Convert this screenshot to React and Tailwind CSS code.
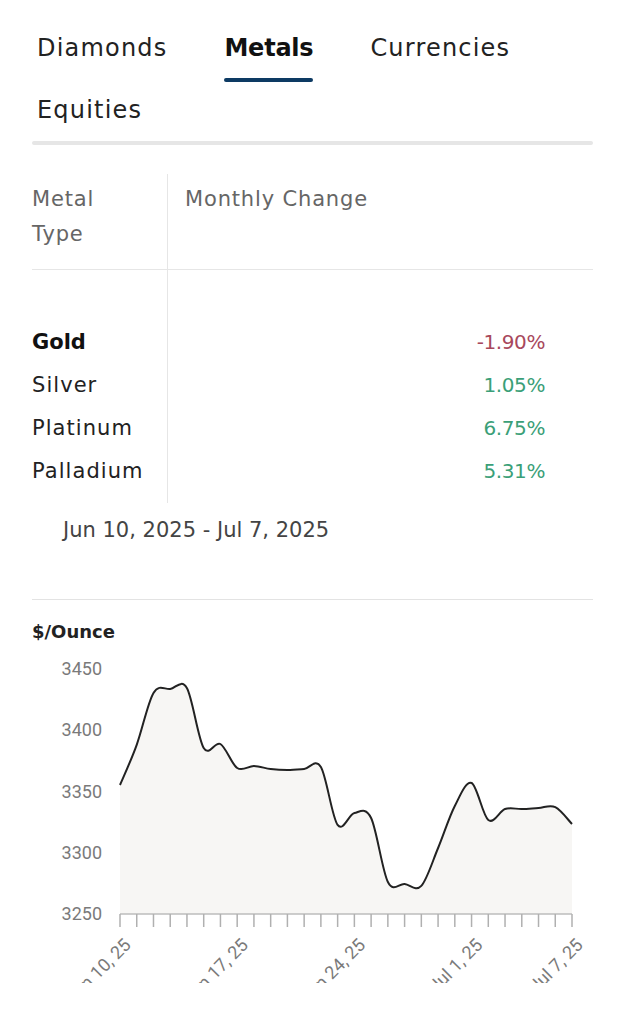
import React from 'react';

const tabs = ['Diamonds', 'Metals', 'Currencies', 'Equities'];

const metals = [
  { name: 'Gold', change: '-1.90%', up: false, bold: true },
  { name: 'Silver', change: '1.05%', up: true },
  { name: 'Platinum', change: '6.75%', up: true },
  { name: 'Palladium', change: '5.31%', up: true },
];

// daily gold price, Jun 10 .. Jul 7
const prices = [
  3355.3, 3388.1, 3430.5, 3433.7, 3434.3, 3385.5, 3388.8, 3369.2, 3370.8, 3368.4,
  3367.6, 3368.4, 3370, 3322.7, 3332.4, 3328.4, 3276.1, 3274.5, 3272.9, 3303.9,
  3338.2, 3356.9, 3326.7, 3335.7, 3335.7, 3336.5, 3337.2, 3323.5,
];

const X0 = 120;
const X1 = 572;
const BASE = 916;
const PX_PER_50 = 61.25;

const xAt = (i) => X0 + (i * (X1 - X0)) / (prices.length - 1);
const yAt = (v) => BASE - ((v - 3250) / 50) * PX_PER_50;

function smoothPath(pts) {
  let d = `M${pts[0][0]},${pts[0][1]}`;
  for (let i = 0; i < pts.length - 1; i++) {
    const p0 = pts[i - 1] || pts[i];
    const p1 = pts[i];
    const p2 = pts[i + 1];
    const p3 = pts[i + 2] || p2;
    const c1x = p1[0] + (p2[0] - p0[0]) / 6;
    const c1y = p1[1] + (p2[1] - p0[1]) / 6;
    const c2x = p2[0] - (p3[0] - p1[0]) / 6;
    const c2y = p2[1] - (p3[1] - p1[1]) / 6;
    d += ` C${c1x.toFixed(1)},${c1y.toFixed(1)} ${c2x.toFixed(1)},${c2y.toFixed(1)} ${p2[0].toFixed(1)},${p2[1].toFixed(1)}`;
  }
  return d;
}

function PriceChart() {
  const pts = prices.map((v, i) => [xAt(i), yAt(v)]);
  const line = smoothPath(pts);
  const area = `${line} L${X1},${BASE} L${X0},${BASE} Z`;
  const yTicks = [3450, 3400, 3350, 3300, 3250];
  const xLabels = [
    { i: 0, t: 'Jun 10, 25' },
    { i: 7, t: 'Jun 17, 25' },
    { i: 14, t: 'Jun 24, 25' },
    { i: 21, t: 'Jul 1, 25' },
    { i: 27, t: 'Jul 7, 25' },
  ];

  return (
    <svg width="561" height="340" viewBox="32 645 561 340" className="block">
      <path d={area} fill="#f7f6f4" />
      <path d={line} fill="none" stroke="#222" strokeWidth="2" />
      <line x1={X0} y1={BASE} x2={X1} y2={BASE} stroke="#bdbdbd" strokeWidth="1.5" />
      {prices.map((_, i) => (
        <line key={i} x1={xAt(i)} y1={BASE} x2={xAt(i)} y2={BASE + 13} stroke="#b0b0b0" strokeWidth="1.5" />
      ))}
      {yTicks.map((v) => (
        <text
          key={v}
          x="102"
          y={yAt(v) + 6}
          textAnchor="end"
          fontFamily="Roboto, sans-serif"
          fontSize="18"
          fill="#7a7a7a"
        >
          {v}
        </text>
      ))}
      {xLabels.map((l) => (
        <text
          key={l.t}
          textAnchor="end"
          fontFamily="Roboto, sans-serif"
          fontSize="18"
          fill="#7a7a7a"
          transform={`translate(${xAt(l.i) + 12},${BASE + 32}) rotate(-45)`}
        >
          {l.t}
        </text>
      ))}
    </svg>
  );
}

export default function App() {
  return (
    <div className="w-[625px] min-h-[1024px] bg-white px-[32px] pt-[32px] font-['DejaVu_Sans',sans-serif]">
      {/* Tabs */}
      <div className="flex flex-wrap gap-x-[47px] gap-y-[12px]">
        {tabs.map((t) => {
          const active = t === 'Metals';
          return (
            <button key={t} className="flex flex-col px-[5px] text-left">
              <span
                className={`h-[32px] text-[24px] leading-[32px] ${
                  active ? 'font-bold tracking-[-0.01em] text-[#111]' : 'tracking-[0.05em] text-[#222]'
                }`}
              >
                {t}
              </span>
              <span
                className={`mt-[14px] h-[4px] rounded-full ${active ? 'bg-[#0d3a63]' : 'bg-transparent'}`}
              />
            </button>
          );
        })}
      </div>
      <div className="-mt-[3px] h-[4px] rounded-full bg-[#e6e6e6]" />

      {/* Table */}
      <div className="mt-[29px] text-[21px]">
        <div className="flex border-b border-[#e6e6e6]">
          <div className="w-[136px] border-r border-[#e6e6e6] pt-[8px] pb-[17px] leading-[35px] tracking-[0.04em] text-[#666]">
            <div>Metal</div>
            <div>Type</div>
          </div>
          <div className="flex-1 pl-[17px] pt-[8px] leading-[35px] tracking-[0.04em] text-[#666]">Monthly Change</div>
        </div>
        <div className="flex">
          <div className="w-[136px] border-r border-[#e6e6e6] pt-[51px] pb-[10px]">
            {metals.map((m) => (
              <div
                key={m.name}
                className={`leading-[43px] ${m.bold ? 'font-bold text-[#111]' : 'tracking-[0.05em] text-[#222]'}`}
              >
                {m.name}
              </div>
            ))}
          </div>
          <div className="flex-1 pt-[51px] pr-[48px] text-right text-[20px] tracking-[-0.02em]">
            {metals.map((m) => (
              <div key={m.name} className={`leading-[43px] ${m.up ? 'text-[#3b9f78]' : 'text-[#a8485c]'}`}>
                {m.change}
              </div>
            ))}
          </div>
        </div>
        <div className="pl-[31px] pt-[12px] leading-[30px] text-[#444]">Jun 10, 2025 - Jul 7, 2025</div>
      </div>

      <div className="mt-[54px] h-px bg-[#e3e3e3]" />

      <div className="pt-[21px] text-[18px] font-semibold leading-[22px] text-[#222]">$/Ounce</div>

      <PriceChart />
    </div>
  );
}
